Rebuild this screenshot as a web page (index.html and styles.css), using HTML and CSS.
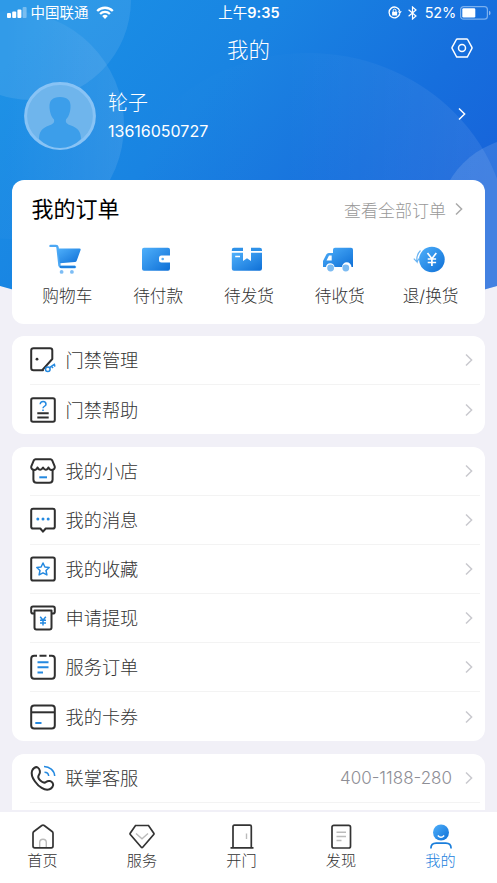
FILE: index.html
```html
<!DOCTYPE html>
<html lang="zh-CN">
<head>
<meta charset="utf-8">
<title>我的</title>
<link rel="stylesheet" href="styles.css">
</head>
<body>
<svg class="defs" width="0" height="0" aria-hidden="true">
  <defs>
    <linearGradient id="blue" x1="0" y1="0" x2="1" y2="1"><stop offset="0" stop-color="#4fb0fb"/><stop offset="1" stop-color="#0e6fd6"/></linearGradient>
    <symbol id="chev" viewBox="0 0 8 14"><path d="M1 1.5 6.6 7 1 12.500" fill="none" stroke="currentColor" stroke-width="1.5"/></symbol>
  </defs>
</svg>
<div class="screen">
  <main class="content">
    <svg class="backdrop" viewBox="0 0 497 330" aria-hidden="true">
      <defs>
        <linearGradient id="sky" gradientUnits="userSpaceOnUse" x1="60" y1="0" x2="400" y2="290"><stop offset="0" stop-color="#1a90e6"/><stop offset=".38" stop-color="#1984e2"/><stop offset=".75" stop-color="#166fdd"/><stop offset="1" stop-color="#1763da"/></linearGradient>
        <linearGradient id="fade"><stop offset="0" stop-color="#fff" stop-opacity="0"/><stop offset=".45" stop-color="#fff" stop-opacity=".01"/><stop offset="1" stop-color="#fff" stop-opacity=".09"/></linearGradient>
        <linearGradient id="glow"><stop offset="0" stop-color="#fff" stop-opacity="0"/><stop offset=".5" stop-color="#fff" stop-opacity=".02"/><stop offset="1" stop-color="#fff" stop-opacity=".1"/></linearGradient>
        <clipPath id="arc"><path d="M0 0H497V286Q248 360 0 286Z"/></clipPath>
      </defs>
      <g clip-path="url(#arc)">
        <rect width="497" height="330" fill="url(#sky)"/>
        <circle cx="10" cy="125" r="114" fill="url(#glow)"/>
        <circle cx="31" cy="0" r="100" fill="#fff" opacity=".09"/>
        <ellipse cx="308" cy="240" rx="200" ry="187" fill="url(#fade)"/>
        <circle cx="525" cy="225" r="87.500" fill="#fff" opacity=".12"/>
      </g>
    </svg>

    <div class="status">
      <div class="status-left">
        <svg width="20" height="11" viewBox="0 0 20 11" fill="#fff"><rect x="0" y="6" width="4" height="5" rx="1"/><rect x="5.200" y="4.500" width="4" height="6.500" rx="1"/><rect x="10.400" y="2.500" width="4" height="8.500" rx="1"/><rect x="15.600" y="0" width="4" height="11" rx="1" opacity=".35"/></svg>
        <span class="carrier">中国联通</span>
        <svg width="18" height="13" viewBox="0 0 18 13"><g fill="none" stroke="#fff" stroke-width="2.300"><path d="M1.200 5A11 11 0 0 1 16.800 5"/><path d="M4.100 8A6.900 6.900 0 0 1 13.900 8"/></g><path d="M9 13 6.200 10.100a4 4 0 0 1 5.600 0Z" fill="#fff"/></svg>
      </div>
      <div class="time">上午<b>9:35</b></div>
      <div class="status-right">
        <svg width="14" height="13" viewBox="0 0 14 13"><path d="M11.800 7.500A5.400 5.400 0 1 1 11.700 5" fill="none" stroke="#fff" stroke-width="1.300"/><path d="M9.800 5.200h4L11.800 8Z" fill="#fff"/><rect x="4.100" y="5.700" width="5" height="3.800" rx=".5" fill="#fff"/><path d="M5.200 6V4.600a1.400 1.400 0 0 1 2.800 0V6" fill="none" stroke="#fff"/></svg>
        <svg width="9" height="14" viewBox="0 0 9 14"><path d="M.6 3.800 8 10 4.500 13V1L8 4 .6 10.200" fill="none" stroke="#fff" stroke-width="1.200"/></svg>
        <span class="pct">52%</span>
        <svg width="31" height="14" viewBox="0 0 31 14"><rect x=".6" y=".6" width="26.800" height="12.600" rx="3" fill="none" stroke="#9cc6f4" stroke-opacity=".75" stroke-width="1.200"/><rect x="2.300" y="2.300" width="13" height="9.200" rx="1.200" fill="#fff"/><path d="M29 4.700q1.600.6 1.600 2.300T29 9.300Z" fill="#8cb7ee"/></svg>
      </div>
    </div>

    <header class="nav">
      <h1>我的</h1>
      <svg class="gear" width="22" height="20" viewBox="0 0 22 20" fill="none" stroke="#fff" stroke-width="1.500"><path d="M6.300 1h9.400Q16.300 1 16.600 1.500L20.800 9.200Q21.200 10 20.800 10.700L16.600 18.500Q16.300 19 15.700 19H6.300Q5.700 19 5.400 18.500L1.200 10.700Q.8 10 1.200 9.200L5.400 1.500Q5.700 1 6.300 1Z"/><circle cx="11" cy="10" r="3.500"/></svg>
    </header>

    <section class="profile">
      <svg class="avatar" width="72" height="68" viewBox="0 0 72 68"><ellipse cx="36" cy="34" rx="34.400" ry="32.400" fill="#6fb5ec" stroke="#88c3f5" stroke-width="3"/><path d="M36 15c7.500 0 11 3.500 10.500 10.500-.2 5-2.300 10-4.500 12-.7 3.500 1 4.500 5 6C54 46 57 50 57 57q-9 9-21 9T15 57c0-7 3-11 10-13.500 4-1.500 5.700-2.500 5-6-2.200-2-4.300-7-4.500-12C25 18.500 28.500 15 36 15Z" fill="#3c9eea"/></svg>
      <div class="who"><div class="name">轮子</div><div class="phone">13616050727</div></div>
      <svg class="chev-lg" width="8" height="14"><use href="#chev"/></svg>
    </section>

    <section class="card orders">
      <div class="orders-head"><h2>我的订单</h2><span class="all">查看全部订单</span><svg width="8" height="14"><use href="#chev"/></svg></div>
      <div class="order-grid">
        <div class="order"><svg width="32" height="32" viewBox="0 0 32 32"><path d="M1.500 2.900H7Q8.300 2.900 8.500 4.200L10.500 22.500Q10.800 24 12.300 24H26" fill="none" stroke="#4da8f4" stroke-width="2.400" stroke-linecap="round"/><path d="M8.300 5.500H30.500Q32 5.500 31.600 7L27.800 17.500Q27.300 19 25.800 19.100L11 20.200Z" fill="url(#blue)"/><path d="M11 23.900H26" stroke="#1e80df" stroke-width="2.300"/><circle cx="12.600" cy="28.900" r="1.900" fill="#7dbdf5"/><circle cx="22.900" cy="28.900" r="1.900" fill="#7dbdf5"/></svg><span>购物车</span></div>
        <div class="order"><svg width="32" height="32" viewBox="0 0 32 32"><path d="M4 4.800H28Q30 4.800 30 6.800V12.500H21.500Q19 12.500 19 15V17Q19 19.500 21.500 19.500H30V25.500Q30 27.700 28 27.700H4Q2 27.700 2 25.700V6.800Q2 4.800 4 4.800Z" fill="url(#blue)"/><circle cx="22.700" cy="16" r="1.300" fill="#5aaef2"/></svg><span>待付款</span></div>
        <div class="order"><svg width="32" height="32" viewBox="0 0 32 32"><path d="M3 4.800H12V8H.8V7Q.8 4.800 3 4.800ZM20 4.800H28.800Q31 4.800 31 7V8H20Z" fill="#2e91e8"/><path d="M.8 9.800H12V18L16 15.300 20 18V9.800H31V25.500Q31 27.700 28.800 27.700H3Q.8 27.700.8 25.500Z" fill="url(#blue)"/><path d="M4.200 13.500H9" stroke="#fff" stroke-width="1.500"/></svg><span>待发货</span></div>
        <div class="order"><svg width="32" height="32" viewBox="0 0 32 32"><path d="M14 4.800H29Q31 4.800 31 6.800V24H29.500A4.300 4.300 0 0 0 20 24H12.500A4.300 4.300 0 0 0 4 24H1V18L4.300 11.500Q5 10 6.800 10H11V6.800Q11 4.800 13 4.800Z" fill="url(#blue)"/><path d="M7 12.500H9.700V17.500H4.500Z" fill="#fff"/><g fill="#7cbbf2"><circle cx="8.600" cy="25" r="3.400"/><circle cx="23.800" cy="25" r="3.400"/></g></svg><span>待收货</span></div>
        <div class="order"><svg width="32" height="32" viewBox="0 0 32 32"><circle cx="18.900" cy="16.500" r="12.800" fill="url(#blue)"/><path d="M14.500 10 18.900 15.700 23.300 10M18.900 15.500V23M14.700 16H23.100M14.700 19.500H23.100" fill="none" stroke="#fff" stroke-width="1.700"/><path d="M7.500 7.500Q3 12 4 19L.8 15.700M4 19.200 6 15.500" fill="none" stroke="#6bb5f3" stroke-width="1.200"/></svg><span>退/换货</span></div>
      </div>
    </section>

    <section class="card list">
      <div class="row"><svg class="ico" viewBox="0 0 26 26"><path d="M13 23.300H3.500Q1.200 23.300 1.200 21V3.500Q1.200 1.200 3.500 1.200H20Q22.300 1.200 22.300 3.500V12L12 23.300Z"/><circle cx="7" cy="12.200" r="1.400" class="dot"/><g class="b"><circle cx="17.800" cy="22.300" r="2.300"/><path d="M19.500 20.600 25 16.800M21.600 19.200 23 21M23.800 17.600 25.200 19.500"/></g></svg><span>门禁管理</span><svg class="go" width="8" height="14"><use href="#chev"/></svg></div>
      <div class="row"><svg class="ico" viewBox="0 0 26 26"><rect x="1.200" y="1.200" width="23.600" height="23.600" rx="1.800"/><path d="M7.300 16.300H18.700M7.300 20.500H18.700"/><path class="b" d="M10.200 7.200C10.200 3.500 16 3.700 16 7.200 16 9.300 13 9.200 13 11.300M13 12.500V14"/></svg><span>门禁帮助</span><svg class="go" width="8" height="14"><use href="#chev"/></svg></div>
    </section>

    <section class="card list">
      <div class="row"><svg class="ico" viewBox="0 0 26 26"><path d="M5.500 1.200H20.500Q21.600 1.200 22.100 2.200L24.700 8.300C25.700 12 20 13.500 18.500 9.500 17 12.800 14.800 12.500 13 9.500 11.200 12.500 9 12.800 7.500 9.500 6 13.500.3 12 1.300 8.300L3.900 2.200Q4.400 1.200 5.500 1.200Z"/><path d="M3.400 11V21.500Q3.400 24.800 6.700 24.800H19.300Q22.600 24.800 22.600 21.500V11"/><path class="b bold" d="M9.300 19.300H17"/></svg><span>我的小店</span><svg class="go" width="8" height="14"><use href="#chev"/></svg></div>
      <div class="row"><svg class="ico" viewBox="0 0 26 26"><path d="M3 1.800H23Q24.800 1.800 24.800 3.600V19.700Q24.800 21.500 23 21.500H15.700L13 24.700 10.300 21.500H3Q1.200 21.500 1.200 19.700V3.600Q1.200 1.800 3 1.800Z"/><g class="fill"><circle cx="7.800" cy="12" r="1.500"/><circle cx="13" cy="12" r="1.500"/><circle cx="18.200" cy="12" r="1.500"/></g></svg><span>我的消息</span><svg class="go" width="8" height="14"><use href="#chev"/></svg></div>
      <div class="row"><svg class="ico" viewBox="0 0 26 26"><rect x="1.200" y="1.500" width="23.600" height="23" rx="1.800"/><path class="b" d="M13 7 14.900 11 19.200 11.500 16 14.500 16.900 18.900 13 16.800 9.100 18.900 10 14.500 6.800 11.500 11.100 11Z"/></svg><span>我的收藏</span><svg class="go" width="8" height="14"><use href="#chev"/></svg></div>
      <div class="row"><svg class="ico" viewBox="0 0 26 26"><path d="M4.500 8.500H3Q1.200 8.500 1.200 6.700V3.300Q1.200 1.500 3 1.500H23Q24.800 1.500 24.800 3.300V6.700Q24.800 8.500 23 8.500H21.500M4.500 5.500H21.500V22.500Q21.500 24.500 19.500 24.500H6.500Q4.500 24.500 4.500 22.500V5.500Z"/><path class="b" d="M10.200 11.700 13 15.200 15.800 11.700M13 15V20.500M10 15.300H16M10 17.900H16"/></svg><span>申请提现</span><svg class="go" width="8" height="14"><use href="#chev"/></svg></div>
      <div class="row"><svg class="ico" viewBox="0 0 26 26"><path d="M7 1.700H4.200Q1.200 1.700 1.200 4.700V21.500Q1.200 24.700 4.200 24.700H21.800Q24.800 24.700 24.800 21.500V4.700Q24.800 1.700 21.800 1.700H19M9.500 1.700H16.500"/><path class="b bold" d="M7.500 8.200H18.500M7.500 13.200H18.500M7.500 18.500H13"/></svg><span>服务订单</span><svg class="go" width="8" height="14"><use href="#chev"/></svg></div>
      <div class="row"><svg class="ico" viewBox="0 0 26 26"><rect x="1.200" y="1.500" width="23.600" height="23" rx="3"/><path d="M1.200 8.300H24.800"/><path class="b bold" d="M5.300 19H11.500"/></svg><span>我的卡券</span><svg class="go" width="8" height="14"><use href="#chev"/></svg></div>
    </section>

    <section class="card list">
      <div class="row"><svg class="ico" viewBox="0 0 26 26"><path d="M2 6C2.800 3.600 5.500 1.200 7.700 2.500 10 4 10.700 7.500 9 9.800 7.500 12 8 13.500 10.300 15.500 12.500 17.500 14.200 18.500 16 17 18.500 15 21.500 16 22.800 18.200 24.300 20.800 21.500 23.500 19.500 24.300 14.500 26 8.500 21.500 5 16.500 2.500 13 .8 9.500 2 6Z"/><path class="b" d="M14 1.500C19.500 1.500 24.300 5.500 24.700 11M14.500 7.300C17 7.300 18.500 8.800 18.700 11"/></svg><span>联掌客服</span><em>400-1188-280</em><svg class="go" width="8" height="14"><use href="#chev"/></svg></div>
      <div class="row"></div>
    </section>
  </main>

  <nav class="tabs">
    <div class="tab"><svg width="26" height="26" viewBox="0 0 26 26"><path d="M3 9.300Q3 8.200 3.900 7.500L11.800 1.500Q13 .7 14.200 1.500L22.100 7.500Q23 8.200 23 9.300V22Q23 23.800 21.200 23.800H4.800Q3 23.800 3 22Z"/><path class="soft" d="M9.700 23V18.500Q9.700 15.200 13 15.200T16.300 18.500V23"/></svg><span>首页</span></div>
    <div class="tab"><svg width="26" height="26" viewBox="0 0 26 26"><path d="M6.500 1.500H19.500L24.800 9.200Q25.200 9.900 24.700 10.500L13.700 23.200Q13 24 12.300 23.200L1.300 10.500Q.8 9.900 1.200 9.200Z"/><path class="soft" d="M7 9.500 13 14.800 19 9.500"/></svg><span>服务</span></div>
    <div class="tab"><svg width="26" height="26" viewBox="0 0 26 26"><path d="M1.500 23.800H24.500M4 23.500V2.500Q4 1.200 5.300 1.200H21Q22.300 1.200 22.300 2.500V23.500"/><path class="soft" d="M17.500 9.500V15"/></svg><span>开门</span></div>
    <div class="tab"><svg width="26" height="26" viewBox="0 0 26 26"><rect x="4" y="1.300" width="18.500" height="22.700" rx="1.800"/><path class="soft" d="M8.500 8.200H18M8.500 12.500H18M8.500 16.500H13.500"/></svg><span>发现</span></div>
    <div class="tab active"><svg width="26" height="26" viewBox="0 0 26 26"><circle cx="13" cy="8.500" r="8" fill="url(#blue)" stroke="none"/><path d="M9.800 11.500Q13 15 16.200 11.500" stroke="#fff" stroke-width="1.500"/><path d="M2.900 24.500Q2.900 19.200 8.200 19.200H17.800Q23.100 19.200 23.100 24.500" stroke="#1a7edb" stroke-width="1.700"/></svg><span>我的</span></div>
  </nav>
</div>
</body>
</html>
```

FILE: styles.css
```css
* { box-sizing: border-box; }

body {
  margin: 0;
  font-family: Inter, "Noto Sans CJK SC", sans-serif;
  font-weight: 300;
  color: #333;
  background: #f1f0f7;
}

svg { display: block; flex: none; }
.defs { position: absolute; }
h1, h2 { margin: 0; font-weight: 300; }

.screen {
  width: 497px;
  height: 883px;
  display: flex;
  flex-direction: column;
  overflow: hidden;
}

.content {
  position: relative;
  height: 809.5px;
  flex: none;
  overflow: hidden;
}

.content > :not(.backdrop) { position: relative; }

.backdrop {
  position: absolute;
  top: 0;
  left: 0;
  width: 497px;
  height: 330px;
}

.status {
  height: 25px;
  padding: 0 6px 0 7px;
  display: grid;
  grid-template-columns: 1fr auto 1fr;
  align-items: center;
  color: #fff;
  font-size: 14.5px;
  line-height: 25px;
}

.status-left, .status-right { display: flex; align-items: center; }
.status-right { justify-content: flex-end; }
.carrier { margin: 0 7px 0 3.500px; font-weight: 400; }
.time { font-weight: 400; }
.time b { font-weight: 600; letter-spacing: .1px; }
.status-right svg:nth-child(2) { margin: 0 8px 0 6px; }
.pct { margin-right: 4px; font-weight: 400; letter-spacing: -.2px; }

.nav {
  height: 50px;
  padding: 0 24px;
  display: grid;
  grid-template-columns: 22px 1fr 22px;
  align-items: center;
  color: #fff;
}
.nav h1 { grid-column: 2; text-align: center; font-size: 21.5px; line-height: 50px; }
.gear { margin: -4px 0 0 0; }

.profile {
  height: 105px;
  padding: 7px 31px 0 24px;
  display: flex;
  align-items: flex-start;
  color: #fff;
}
.who { flex: 1; margin: 6px 0 0 12px; }
.name { font-size: 20px; line-height: 30px; }
.phone { font-size: 16px; line-height: 26px; font-weight: 400; }
.chev-lg { margin-top: 25px; }

.card {
  margin: 0 12px 12.5px;
  background: #fff;
  border-radius: 12px;
}

.orders { height: 143.5px; padding: 13px 0 0; }
.orders-head {
  height: 32px;
  padding: 0 22px 0 19.500px;
  display: flex;
  align-items: center;
}
.orders-head h2 { flex: 1; color: #000; font-size: 22px; line-height: 32px; font-weight: 400; }
.all { color: #999; font-size: 17px; }
.orders-head svg { margin-left: 9px; color: #aaa; }

.order-grid {
  display: grid;
  grid-template-columns: repeat(5, 90.800px);
  margin: 18px 0 0 8px;
}
.order { display: flex; flex-direction: column; align-items: center; }
.order span { margin-top: 8px; padding-left: 4px; font-size: 16.7px; line-height: 26px; }

.row {
  height: 49.1px;
  margin: 0 5px 0 17.5px;
  padding-right: 7px;
  display: flex;
  align-items: center;
  border-bottom: 1px solid #f3f3f3;
}
.row:last-child { border-bottom: 0; }
.row > span { margin-left: 10px; flex: 1; font-size: 18.2px; line-height: 26px; }
.row em { margin-right: 13px; font-style: normal; color: #8e8e96; font-size: 17px; }
.go { color: #c9c9ce; }

.ico {
  width: 26px;
  height: 26px;
  overflow: visible;
  fill: none;
  stroke: #2f2f2f;
  stroke-width: 2;
  stroke-linejoin: round;
}
.ico .b { stroke: #2489e0; stroke-width: 1.5; }
.ico .bold { stroke-width: 2; }
.ico .dot { fill: #2f2f2f; stroke: none; }
.ico .fill { fill: #2489e0; stroke: none; }

.tabs {
  height: 71.5px;
  margin-top: 2px;
  padding: 12px 40.500px 0 26.500px;
  display: flex;
  justify-content: space-between;
  background: #fff;
}
.tab {
  width: 32px;
  display: flex;
  flex-direction: column;
  align-items: center;
  font-size: 15.2px;
  line-height: 22px;
  white-space: nowrap;
}
.tab svg { fill: none; stroke: #333; stroke-width: 1.7; }
.tab .soft { stroke: #bbb; stroke-width: 1.4; }
.tab.active { color: #1a80dd; }
```
